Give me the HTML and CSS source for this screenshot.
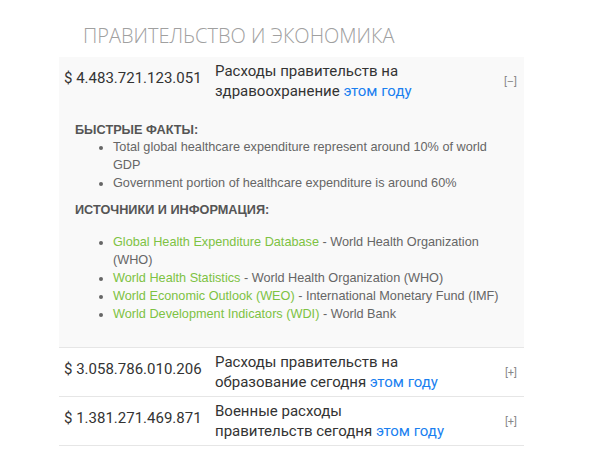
FILE: index.html
```html
<!DOCTYPE html>
<html lang="ru">
<head>
    <meta charset="UTF-8">
    <meta name="viewport" content="width=device-width, initial-scale=1.0">
    <title>Правительство и экономика</title>
    <link rel="stylesheet" href="styles.css">
</head>
<body>
    <div class="section">
        <h2 class="section-title">Правительство и экономика</h2>

        <div class="stat open">
            <div class="stat-head">
                <span class="amount">$ 4.483.721.123.051</span>
                <span class="label">Расходы правительств на<br>здравоохранение <a href="#">этом году</a></span>
                <span class="toggle">[&ndash;]</span>
            </div>
            <div class="stat-info">
                <h4>Быстрые факты:</h4>
                <ul class="facts">
                    <li>Total global healthcare expenditure represent around 10% of world GDP</li>
                    <li>Government portion of healthcare expenditure is around 60%</li>
                </ul>
                <h4>Источники и информация:</h4>
                <ul class="sources">
                    <li><a href="#">Global Health Expenditure Database</a> - World Health Organization (WHO)</li>
                    <li><a href="#">World Health Statistics</a> - World Health Organization (WHO)</li>
                    <li><a href="#">World Economic Outlook (WEO)</a> - International Monetary Fund (IMF)</li>
                    <li><a href="#">World Development Indicators (WDI)</a> - World Bank</li>
                </ul>
            </div>
        </div>

        <div class="stat">
            <div class="stat-head">
                <span class="amount">$ 3.058.786.010.206</span>
                <span class="label">Расходы правительств на<br>образование сегодня <a href="#">этом году</a></span>
                <span class="toggle">[+]</span>
            </div>
        </div>

        <div class="stat">
            <div class="stat-head">
                <span class="amount">$ 1.381.271.469.871</span>
                <span class="label">Военные расходы<br>правительств сегодня <a href="#">этом году</a></span>
                <span class="toggle">[+]</span>
            </div>
        </div>
    </div>
</body>
</html>
```

FILE: styles.css
```css
body {
    margin: 0;
    padding: 0;
    background: #fff;
    font-family: 'Open Sans', sans-serif;
    color: #333;
}
a {
    text-decoration: none;
}
.section {
    width: 465px;
    margin-left: 59px;
}
.section-title {
    margin: 0;
    padding: 23px 0 8px 24px;
    font-size: 20px;
    font-weight: 300;
    line-height: 26px;
    color: #a0a0a0;
    text-transform: uppercase;
}
.stat {
    border-bottom: 1px solid #e6e6e6;
}
.stat.open {
    background-color: #f9f9f9;
}
.stat-head {
    display: flex;
    align-items: flex-start;
    padding: 4px 7px 4px 5px;
    font-family: Roboto, sans-serif;
}
.amount {
    width: 151px;
    padding-top: 7px;
    font-size: 15px;
    line-height: 20px;
    color: #333;
}
.label {
    flex: 1;
    font-size: 15px;
    line-height: 20px;
    color: #333;
}
.label a {
    color: #1a7ff0;
}
.toggle {
    align-self: center;
    font-size: 11px;
    color: #888;
}
.stat-info {
    padding: 17px 12px 24px 16px;
    font-family: 'Liberation Sans', Arial, sans-serif;
    font-size: 12.7px;
    color: #666;
}
.stat-info h4 {
    margin: 0;
    font-size: 12.7px;
    line-height: 16px;
    color: #555;
    text-transform: uppercase;
}
.stat-info ul {
    margin: 0 0 10px;
    padding-left: 38px;
    line-height: 18px;
}
.stat-info ul.sources {
    margin-top: 15px;
    margin-bottom: 0;
}
.sources a {
    color: #7dc243;
}
```
